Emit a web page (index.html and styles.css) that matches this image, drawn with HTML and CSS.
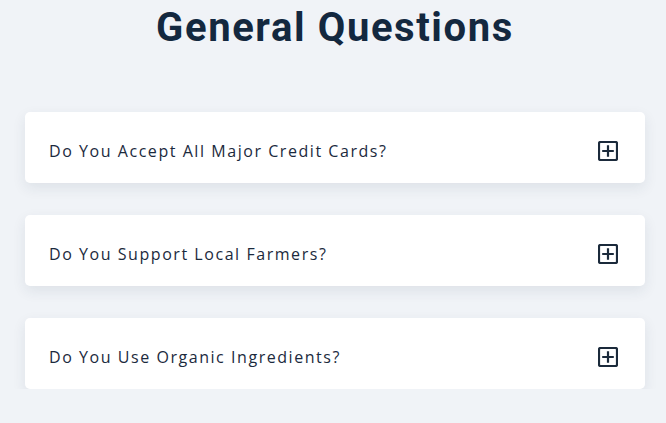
FILE: index.html
```html
<!DOCTYPE html>
<html lang="en">
<head>
<meta charset="utf-8">
<title>General Questions</title>
<link rel="stylesheet" href="styles.css">
</head>
<body>
<main class="faq">
  <h1 class="faq-title">General Questions</h1>
  <div class="faq-list">
    <div class="faq-item">
      <span class="faq-question">Do You Accept All Major Credit Cards?</span>
      <svg class="faq-icon" width="20" height="20" viewBox="0 0 20 20"><rect x="1" y="1" width="18" height="18" rx="1.5" fill="none" stroke="#1b2a3b" stroke-width="2.2"/><path d="M10 4.2v11.6M4.2 10h11.6" stroke="#1b2a3b" stroke-width="2.2"/></svg>
    </div>
    <div class="faq-item">
      <span class="faq-question">Do You Support Local Farmers?</span>
      <svg class="faq-icon" width="20" height="20" viewBox="0 0 20 20"><rect x="1" y="1" width="18" height="18" rx="1.5" fill="none" stroke="#1b2a3b" stroke-width="2.2"/><path d="M10 4.2v11.6M4.2 10h11.6" stroke="#1b2a3b" stroke-width="2.2"/></svg>
    </div>
    <div class="faq-item">
      <span class="faq-question">Do You Use Organic Ingredients?</span>
      <svg class="faq-icon" width="20" height="20" viewBox="0 0 20 20"><rect x="1" y="1" width="18" height="18" rx="1.5" fill="none" stroke="#1b2a3b" stroke-width="2.2"/><path d="M10 4.2v11.6M4.2 10h11.6" stroke="#1b2a3b" stroke-width="2.2"/></svg>
    </div>
  </div>
</main>
</body>
</html>
```
FILE: styles.css
```css
html, body {
  margin: 0;
  padding: 0;
  background: #f0f3f7;
}
.faq {
  margin: 0 21px 0 25px;
}
.faq-title {
  margin: 4px 0 0;
  text-align: center;
  font-family: Roboto, "Liberation Sans", sans-serif;
  font-weight: 700;
  font-size: 40px;
  line-height: 47px;
  letter-spacing: 1.6px;
  color: #13283f;
}
.faq-list {
  margin-top: 61px;
  display: flex;
  flex-direction: column;
  gap: 32px;
}
.faq-item {
  height: 71px;
  box-sizing: border-box;
  padding: 27px 27px 20px 24px;
  background: #ffffff;
  border-radius: 5px;
  box-shadow: 0 5px 14px rgba(30, 50, 80, 0.09);
  display: flex;
  align-items: flex-start;
  justify-content: space-between;
}
.faq-question {
  font-family: "Open Sans", "Liberation Sans", sans-serif;
  font-size: 16px;
  line-height: 24px;
  letter-spacing: 1.55px;
  color: #1b2a3d;
}
.faq-icon {
  display: block;
  margin-top: 2px;
}
```
